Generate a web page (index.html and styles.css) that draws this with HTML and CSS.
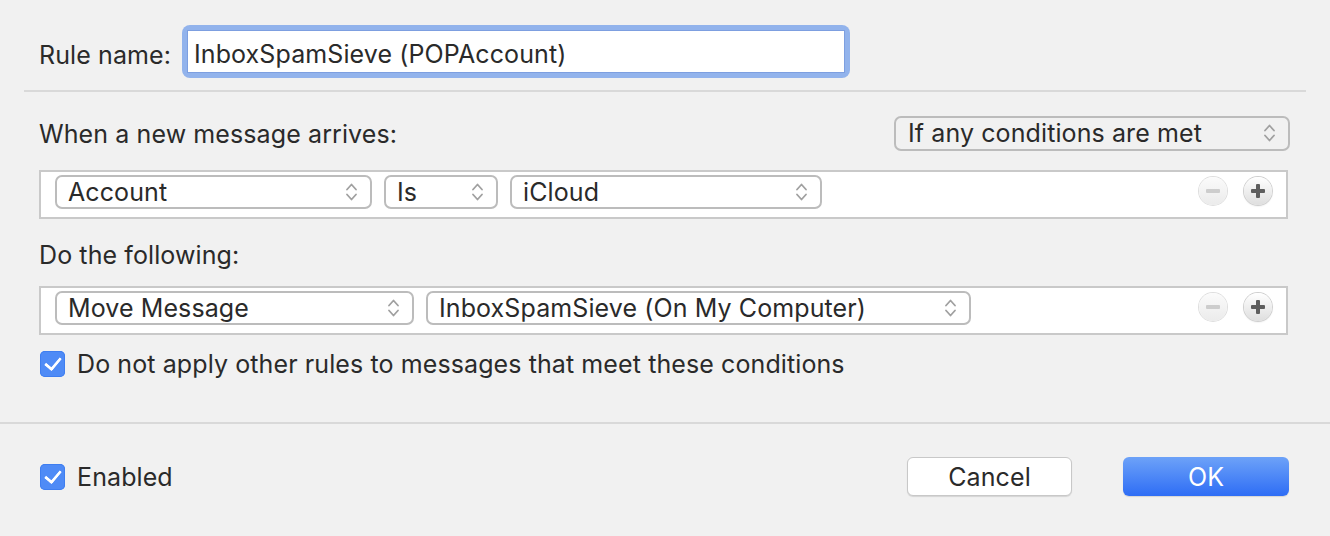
FILE: index.html
```html
<!DOCTYPE html>
<html>
<head>
    <meta name="viewport" content="width=device-width, initial-scale=1.0">
    <title>Rule</title>
    <link rel="stylesheet" href="styles.css">
</head>
<body>
    <div class="name-row">
        <label class="name-label">Rule name:</label>
        <div class="field-ring">
            <div class="field">InboxSpamSieve (POPAccount)</div>
        </div>
    </div>

    <div class="separator"></div>

    <div class="rules">
        <div class="header-row">
            <span>When a new message arrives:</span>
            <div class="popup popup-any">If any conditions are met<span class="chev"></span></div>
        </div>

        <div class="box">
            <div class="popup w-account">Account<span class="chev"></span></div>
            <div class="popup w-is">Is<span class="chev"></span></div>
            <div class="popup w-icloud">iCloud<span class="chev"></span></div>
            <div class="round-buttons">
                <span class="round minus disabled"></span>
                <span class="round plus"></span>
            </div>
        </div>

        <div class="section-label">Do the following:</div>

        <div class="box">
            <div class="popup w-move">Move Message<span class="chev"></span></div>
            <div class="popup w-mailbox">InboxSpamSieve (On My Computer)<span class="chev"></span></div>
            <div class="round-buttons">
                <span class="round minus disabled"></span>
                <span class="round plus"></span>
            </div>
        </div>

        <div class="check-row">
            <span class="checkbox"></span>
            <span>Do not apply other rules to messages that meet these conditions</span>
        </div>
    </div>

    <div class="separator full"></div>

    <div class="footer">
        <div class="check-row">
            <span class="checkbox"></span>
            <span>Enabled</span>
        </div>
        <div class="buttons">
            <button type="button" class="btn cancel">Cancel</button>
            <button type="button" class="btn ok">OK</button>
        </div>
    </div>
</body>
</html>
```

FILE: styles.css
```css
body {
    margin: 0;
    background: #f1f1f1;
    font-family: Inter, "Noto Sans", sans-serif;
    font-size: 25px;
    letter-spacing: 0.1px;
    color: #2a2a2a;
    width: 1330px;
    height: 536px;
    overflow: hidden;
}
.name-row {
    display: flex;
    align-items: center;
    padding: 25px 0 0 39px;
}
.name-label {
    width: 143px;
    padding-top: 6px;
}
.field-ring {
    padding: 5px;
    background: #92b3ec;
    border-radius: 8px;
}
.field {
    width: 650px;
    height: 38px;
    line-height: 41px;
    padding: 3px 0 0 6px;
    background: #fff;
    border: 1px solid #7d9fe0;
}
.separator {
    height: 2px;
    background: #d9d9d9;
    margin: 12px 24px 0;
}
.separator.full {
    margin: 43px 0 0;
}
.rules {
    padding: 24px 42px 0 39px;
}
.header-row {
    display: flex;
    justify-content: space-between;
    align-items: center;
    margin-right: -2px;
}
.popup {
    position: relative;
    box-sizing: border-box;
    height: 34px;
    line-height: 31px;
    padding-left: 11px;
    border: 2px solid #bcbcbc;
    border-radius: 7px;
    background: transparent;
}
.popup-any {
    width: 396px;
    height: 35px;
    padding-left: 12px;
}
.chev {
    position: absolute;
    right: 12px;
    top: 4px;
    width: 13px;
    height: 22px;
    background:
        url("data:image/svg+xml;utf8,<svg xmlns='http://www.w3.org/2000/svg' width='13' height='22' viewBox='0 0 13 22'><path d='M2 8.5 L6.5 3.5 L11 8.5 M2 13.5 L6.5 18.5 L11 13.5' fill='none' stroke='%23a0a0a0' stroke-width='1.8' stroke-linecap='round' stroke-linejoin='round'/></svg>") no-repeat;
}
.box {
    display: flex;
    align-items: flex-start;
    height: 42px;
    padding: 3px 14px 0 14px;
    background: #fff;
    border: 2px solid #c9c9c9;
    margin-top: 19px;
}
.box .popup + .popup {
    margin-left: 12px;
}
.w-account { width: 317px; }
.w-is { width: 114px; }
.w-icloud { width: 312px; }
.w-move { width: 359px; }
.w-mailbox { width: 545px; }
.round-buttons {
    margin-left: auto;
    display: flex;
    gap: 17px;
    margin-top: 2px;
}
.round {
    position: relative;
    width: 28px;
    height: 28px;
    border-radius: 50%;
    background: linear-gradient(#ffffff, #dedede);
    box-shadow: 0 0 0 1px #cfcfcf, 0 1px 2px rgba(0, 0, 0, 0.15);
}
.round::before, .plus::after {
    content: "";
    position: absolute;
    left: 7px;
    top: 12px;
    width: 14px;
    height: 4px;
    border-radius: 1px;
    background: #5e5e5e;
}
.plus::after {
    left: 12px;
    top: 7px;
    width: 4px;
    height: 14px;
}
.round.disabled {
    background: linear-gradient(#fbfbfb, #ebebeb);
    box-shadow: 0 0 0 1px #dedede;
}
.round.disabled::before {
    background: #cdcdcd;
}
.section-label {
    margin-top: 21px;
    line-height: 30px;
}
.section-label + .box {
    margin-top: 16px;
}
.check-row {
    display: flex;
    align-items: center;
    margin-top: 14px;
    margin-left: 1px;
}
.checkbox {
    position: relative;
    width: 25px;
    height: 26px;
    margin-right: 12px;
    border-radius: 5px;
    background: #4f8bf6;
    box-shadow: inset 0 0 0 1px #3f7ef0;
}
.checkbox::after {
    content: "";
    position: absolute;
    left: 8px;
    top: 3px;
    width: 7px;
    height: 13px;
    border: solid #fff;
    border-width: 0 3px 3px 0;
    border-radius: 0 0 2px 0;
    transform: rotate(40deg);
}
.footer {
    display: flex;
    justify-content: space-between;
    align-items: center;
    padding: 33px 41px 0 39px;
}
.footer .check-row {
    margin-top: 0;
}
.buttons {
    display: flex;
    gap: 51px;
}
.btn {
    height: 39px;
    font-family: inherit;
    font-size: 25px;
    letter-spacing: 0.1px;
    border-radius: 6px;
    cursor: pointer;
}
.cancel {
    width: 165px;
    background: #fff;
    color: #2a2a2a;
    border: 1px solid #c8c8c8;
    box-shadow: 0 1px 1px rgba(0, 0, 0, 0.12);
}
.ok {
    width: 166px;
    color: #fff;
    border: none;
    background: linear-gradient(#6da2f8, #2e6df5);
    box-shadow: 0 1px 1px rgba(0, 0, 0, 0.12);
}
```
